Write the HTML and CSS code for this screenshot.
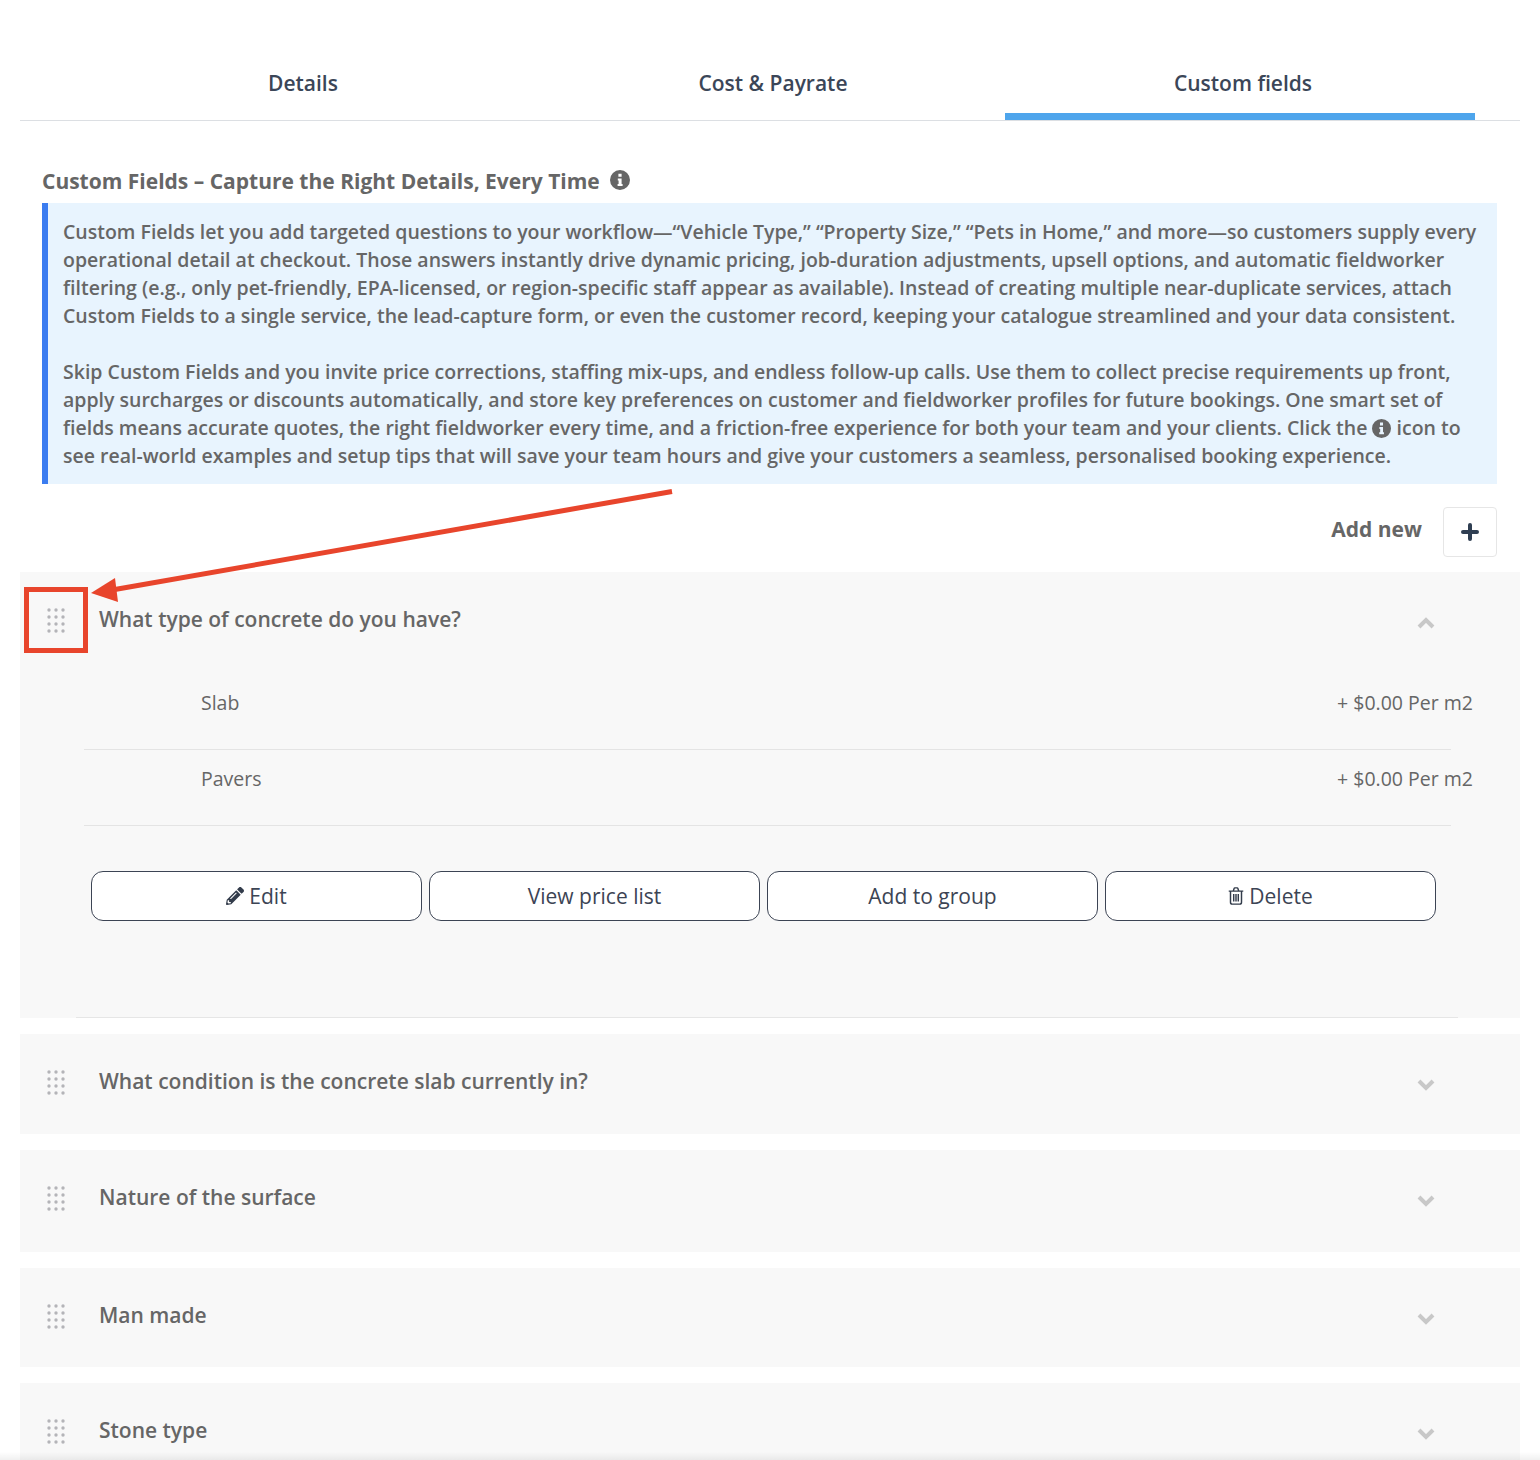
FILE: index.html
```html
<!DOCTYPE html>
<html>
<head>
  <meta charset="utf-8">
  <title>Custom fields</title>
  <link rel="stylesheet" href="styles.css">
</head>
<body>
  <div class="page">
    <div class="tabs">
      <a class="tab">Details</a>
      <a class="tab">Cost &amp; Payrate</a>
      <a class="tab active">Custom fields</a>
    </div>

    <div class="intro">
      <h3 class="intro-title">
        Custom Fields – Capture the Right Details, Every Time
        <svg class="info-icon" viewBox="0 0 20 20"><use href="#info"/></svg>
      </h3>
      <div class="notice">
        <p>Custom Fields let you add targeted questions to your workflow—“Vehicle Type,” “Property Size,” “Pets in Home,” and more—so customers supply every operational detail at checkout. Those answers instantly drive dynamic pricing, job-duration adjustments, upsell options, and automatic fieldworker filtering (e.g., only pet-friendly, EPA-licensed, or region-specific staff appear as available). Instead of creating multiple near-duplicate services, attach Custom Fields to a single service, the lead-capture form, or even the customer record, keeping your catalogue streamlined and your data consistent.</p>
        <p>Skip Custom Fields and you invite price corrections, staffing mix-ups, and endless follow-up calls. Use them to collect precise requirements up front, apply surcharges or discounts automatically, and store key preferences on customer and fieldworker profiles for future bookings. One smart set of fields means accurate quotes, the right fieldworker every time, and a friction-free experience for both your team and your clients. Click the <svg class="info-inline" viewBox="0 0 20 20"><use href="#info"/></svg> icon to see real-world examples and setup tips that will save your team hours and give your customers a seamless, personalised booking experience.</p>
      </div>
      <div class="add-row">
        <span class="add-label">Add new</span>
        <button class="add-btn">
          <svg width="18" height="18" viewBox="0 0 18 18"><path d="M9 2v14M2 9h14" stroke="#2f3e52" stroke-width="4" stroke-linecap="round"/></svg>
        </button>
      </div>
    </div>

    <div class="fields">
      <div class="field open">
        <div class="field-head">
          <svg class="drag" viewBox="0 0 20 26"><use href="#dots"/></svg>
          <span class="field-name">What type of concrete do you have?</span>
          <svg class="chevron" viewBox="0 0 20 12"><path d="M3 10l7-7 7 7"/></svg>
        </div>
        <div class="options">
          <div class="option"><span>Slab</span><span class="price">+ $0.00 Per m2</span></div>
          <div class="option"><span>Pavers</span><span class="price">+ $0.00 Per m2</span></div>
        </div>
        <div class="actions">
          <button class="action">
            <svg class="action-icon" viewBox="0 0 512 512"><path fill="#333c4b" d="M497.9 142.1l-46.1 46.1c-4.7 4.7-12.3 4.7-17 0l-111-111c-4.7-4.7-4.7-12.3 0-17l46.1-46.1c18.7-18.7 49.1-18.7 67.9 0l60.1 60.1c18.8 18.7 18.8 49.1 0 67.9zM284.2 99.8L21.6 362.4.4 483.9c-2.9 16.4 11.4 30.6 27.8 27.8l121.5-21.3 262.6-262.6c4.7-4.7 4.7-12.3 0-17l-111-111c-4.8-4.7-12.4-4.7-17.1 0zM124.1 339.9c-5.5-5.5-5.5-14.3 0-19.8l154-154c5.5-5.5 14.3-5.5 19.8 0s5.5 14.3 0 19.8l-154 154c-5.5 5.5-14.3 5.5-19.8 0zM88 424h48v36.3l-64.5 11.3-31.1-31.1L51.7 376H88v48z"/></svg>
            Edit
          </button>
          <button class="action">View price list</button>
          <button class="action">Add to group</button>
          <button class="action">
            <svg class="trash-icon" viewBox="0.300 0.700 15.400 17"><path fill="none" stroke="#333c4b" stroke-width="1.400" d="M1 4.500h14M2.700 4.500v10.700c0 1 .7 1.800 1.600 1.800h7.400c.9 0 1.600-.8 1.600-1.800V4.500M5.300 4.500l.9-2.600c.1-.3.4-.5.7-.5h2.200c.3 0 .6.200.7.500l.9 2.600M5.800 7.300v7.200M8 7.300v7.200M10.200 7.300v7.200"/></svg>
            Delete
          </button>
        </div>
        <div class="field-rule"></div>
      </div>

      <div class="field">
        <div class="field-head">
          <svg class="drag" viewBox="0 0 20 26"><use href="#dots"/></svg>
          <span class="field-name">What condition is the concrete slab currently in?</span>
          <svg class="chevron" viewBox="0 0 20 12"><path d="M3 2l7 7 7-7"/></svg>
        </div>
      </div>
      <div class="field tall">
        <div class="field-head">
          <svg class="drag" viewBox="0 0 20 26"><use href="#dots"/></svg>
          <span class="field-name">Nature of the surface</span>
          <svg class="chevron" viewBox="0 0 20 12"><path d="M3 2l7 7 7-7"/></svg>
        </div>
      </div>
      <div class="field short">
        <div class="field-head">
          <svg class="drag" viewBox="0 0 20 26"><use href="#dots"/></svg>
          <span class="field-name">Man made</span>
          <svg class="chevron" viewBox="0 0 20 12"><path d="M3 2l7 7 7-7"/></svg>
        </div>
      </div>
      <div class="field">
        <div class="field-head">
          <svg class="drag" viewBox="0 0 20 26"><use href="#dots"/></svg>
          <span class="field-name">Stone type</span>
          <svg class="chevron" viewBox="0 0 20 12"><path d="M3 2l7 7 7-7"/></svg>
        </div>
      </div>
    </div>
  </div>

  <!-- screenshot annotation drawn over the page -->
  <svg class="annotation" viewBox="0 0 1540 1460">
    <rect x="26.500" y="589.500" width="59" height="61" fill="none" stroke="#e8452c" stroke-width="5"/>
    <path d="M672 491.500L112 590" stroke="#e8452c" stroke-width="5" fill="none"/>
    <path d="M91 593L115 578L118 602Z" fill="#e8452c"/>
  </svg>
  <div class="bottom-shade"></div>

  <!-- shared icons -->
  <svg class="defs" width="0" height="0">
    <defs>
      <g id="info">
        <path fill-rule="evenodd" fill="currentColor" d="M10 0a10 10 0 1 0 0 20a10 10 0 0 0 0-20zM8.400 3.800h3.200v3H8.400zM7.800 8.400h3.800v5.600h1v2H7.600v-2h1v-3.600h-.8z"/>
      </g>
      <g id="dots" fill="#b4b4b8">
        <circle cx="3" cy="3" r="1.700"/><circle cx="10" cy="3" r="1.700"/><circle cx="17" cy="3" r="1.700"/>
        <circle cx="3" cy="10" r="1.700"/><circle cx="10" cy="10" r="1.700"/><circle cx="17" cy="10" r="1.700"/>
        <circle cx="3" cy="17" r="1.700"/><circle cx="10" cy="17" r="1.700"/><circle cx="17" cy="17" r="1.700"/>
        <circle cx="3" cy="24" r="1.700"/><circle cx="10" cy="24" r="1.700"/><circle cx="17" cy="24" r="1.700"/>
      </g>
    </defs>
  </svg>
</body>
</html>
```

FILE: styles.css
```css
* {
  box-sizing: border-box;
}

html, body {
  height: 1460px;
  overflow: hidden;
}

body {
  margin: 0;
  background: #fff;
  font-family: "Open Sans", sans-serif;
  color: #666;
}

.page {
  width: 1500px;
  margin-left: 20px;
}

/* tabs */
.tabs {
  display: flex;
  height: 121px;
  padding: 0 0 0 45px;
  border-bottom: 1px solid #dcdfe3;
}

.tab {
  width: 470px;
  height: 120px;
  padding: 70px 0 0 6px;
  text-align: center;
  font-size: 21px;
  line-height: 27px;
  font-weight: 600;
  color: #3b4658;
}

.tab.active {
  border-bottom: 7px solid #4ea5ec;
}

/* intro */
.intro {
  padding: 0 23px 0 22px;
}

.intro-title {
  display: flex;
  align-items: center;
  gap: 10px;
  margin: 41px 0 3px;
  height: 38px;
  font-size: 21px;
  line-height: 34px;
  font-weight: 700;
  color: #666;
}

.info-icon {
  width: 20px;
  height: 20px;
  margin: -3px 0 0 0;
  color: #666;
}

.info-inline {
  width: 19px;
  height: 19px;
  vertical-align: -3px;
  color: #666;
}

.notice {
  height: 281px;
  padding: 15px 15px 0 15px;
  background: #e8f4fe;
  border-left: 6px solid #3b7cf0;
  font-size: 19.500px;
  line-height: 28px;
  font-weight: 600;
  color: #666;
}

.notice p {
  margin: 0 0 28px;
}

.add-row {
  display: flex;
  justify-content: flex-end;
  align-items: center;
  gap: 21px;
  margin-top: 23px;
}

.add-label {
  font-size: 21px;
  font-weight: 700;
  color: #666;
  margin-top: -7px;
}

.add-btn {
  display: flex;
  align-items: center;
  justify-content: center;
  width: 54px;
  height: 50px;
  padding: 0;
  background: #fff;
  border: 1px solid #e6e6e6;
  border-radius: 4px;
}

/* field list */
.fields {
  display: flex;
  flex-direction: column;
  gap: 16px;
  margin-top: 15px;
}

.field {
  height: 100px;
  background: #f8f8f8;
}

.field.tall {
  height: 101.500px;
}

.field.short {
  height: 99.500px;
}

.field.open {
  display: flex;
  flex-direction: column;
  height: 446px;
}

.field-rule {
  margin: auto 62px 0 56px;
  border-bottom: 1px solid #e6e6e6;
}

.field-head {
  display: flex;
  align-items: flex-start;
  position: relative;
  padding: 31px 0 0 26px;
}

.drag {
  width: 20px;
  height: 26px;
  margin-top: 4px;
  flex-shrink: 0;
}

.field-name {
  margin-left: 33px;
  font-size: 21px;
  line-height: 32px;
  font-weight: 600;
  color: #666;
}

.chevron {
  position: absolute;
  left: 1396px;
  top: 45px;
  width: 20px;
  height: 12px;
  fill: none;
  stroke: #c8c8c8;
  stroke-width: 4;
}

.options {
  margin: 39px 69px 0 64px;
}

.option {
  display: flex;
  justify-content: space-between;
  height: 76px;
  padding: 15px 0 0 117px;
  border-bottom: 1px solid #e4e4e4;
  font-size: 19.500px;
  line-height: 28px;
  color: #666;
}

.price {
  margin-right: -22px;
}

.actions {
  display: flex;
  gap: 7px;
  margin: 45px 0 0 71px;
}

.action {
  display: flex;
  align-items: center;
  justify-content: center;
  gap: 5px;
  width: 331px;
  height: 50px;
  padding: 0;
  background: #fff;
  border: 1px solid #3c4454;
  border-radius: 12px;
  font-family: "Open Sans", sans-serif;
  font-size: 21px;
  color: #3c4454;
}

.action-icon {
  width: 18px;
  height: 18px;
}

.trash-icon {
  width: 16px;
  height: 18px;
}

/* overlays */
.annotation {
  position: absolute;
  left: 0;
  top: 0;
  width: 1540px;
  height: 1460px;
  pointer-events: none;
}

.bottom-shade {
  position: absolute;
  left: 0;
  right: 0;
  bottom: 0;
  height: 8px;
  background: linear-gradient(rgba(0,0,0,0), rgba(0,0,0,0.06));
}

.defs {
  position: absolute;
}
```
